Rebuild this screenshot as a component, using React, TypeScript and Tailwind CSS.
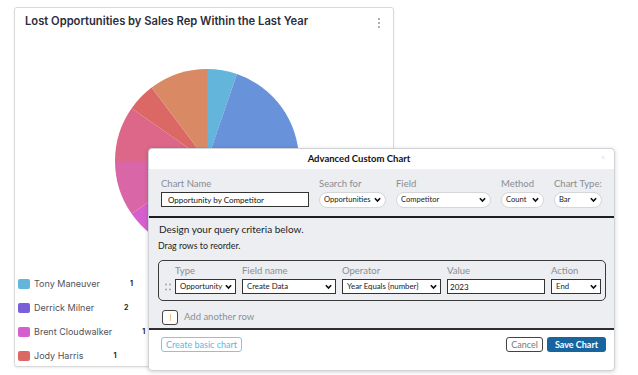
import React from "react";

const CX = 94;
const CY = 92;
const R = 92;

function pt(deg: number) {
  const a = ((deg - 90) * Math.PI) / 180;
  return [CX + R * Math.cos(a), CY + R * Math.sin(a)];
}

function slicePath(a0: number, a1: number) {
  const [x0, y0] = pt(a0);
  const [x1, y1] = pt(a1);
  const large = a1 - a0 > 180 ? 1 : 0;
  return `M ${CX} ${CY} L ${x0} ${y0} A ${R} ${R} 0 ${large} 1 ${x1} ${y1} Z`;
}

const slices = [
  { a0: 0, a1: 19, c: "#63b5dc" },
  { a0: 19, a1: 160, c: "#6892da" },
  { a0: 160, a1: 200, c: "#7b5fd9" },
  { a0: 200, a1: 235, c: "#d55fcd" },
  { a0: 235, a1: 270, c: "#d966a6" },
  { a0: 270, a1: 305, c: "#dc6788" },
  { a0: 305, a1: 323, c: "#dc6866" },
  { a0: 323, a1: 360, c: "#d98a65" },
];

const legend = [
  { name: "Tony Maneuver", n: "1", c: "#63b5dc" },
  { name: "Derrick Milner", n: "2", c: "#7b5fd9" },
  { name: "Brent Cloudwalker", n: "1", c: "#d55fcd" },
  { name: "Jody Harris", n: "1", c: "#dc6866" },
];

function Chev() {
  return (
    <svg width="7" height="6" viewBox="0 0 8 6" className="shrink-0">
      <path d="M1 1 L4 4.2 L7 1" fill="none" stroke="#111" strokeWidth="1.9" />
    </svg>
  );
}

function PillSelect({ text, w }: { text: string; w: string }) {
  return (
    <div
      className={`${w} h-[16px] rounded-full border border-[#d4d6d9] bg-white flex items-center justify-between pl-[4px] pr-[4px] text-[7.6px] text-[#222] whitespace-nowrap`}
    >
      <span>{text}</span>
      <Chev />
    </div>
  );
}

function BoxSelect({ text, w }: { text: string; w: string }) {
  return (
    <div
      className={`${w} h-[15px] border-[1.5px] border-[#333] bg-white flex items-center justify-between pl-[4px] pr-[3px] text-[7.8px] text-[#222] whitespace-nowrap`}
    >
      <span>{text}</span>
      <Chev />
    </div>
  );
}

function Label({ children }: { children: React.ReactNode }) {
  return <div className="text-[9.5px] leading-[11px] text-[#8a8d91] mb-[3px] whitespace-nowrap">{children}</div>;
}

export default function App() {
  return (
    <div className="relative w-[638px] h-[375px] bg-white overflow-hidden" style={{ fontFamily: "Lato, 'Open Sans', sans-serif" }}>
      {/* Chart card */}
      <div
        className="absolute left-[14px] top-[7px] w-[380px] h-[360px] border border-[#d9d9d9] rounded-[3px] bg-white shadow-[0_1px_2px_rgba(0,0,0,0.08)]"
        style={{ fontFamily: "Inter, 'Noto Sans', sans-serif" }}
      >
        <div className="flex items-start justify-between pl-[10px] pr-[12px] pt-[6px]">
          <div className="text-[11.2px] font-semibold text-[#2b2d3a] leading-[15px] whitespace-nowrap">
            Lost Opportunities by Sales Rep Within the Last Year
          </div>
          <svg width="4" height="12" viewBox="0 0 4 12" className="mt-[3px]">
            <circle cx="2" cy="2" r="1" fill="#8a97a8" />
            <circle cx="2" cy="6" r="1" fill="#8a97a8" />
            <circle cx="2" cy="10" r="1" fill="#8a97a8" />
          </svg>
        </div>
        <div className="ml-[98px] mt-[40px]">
          <svg width="188" height="188" viewBox="0 0 188 188">
            {slices.map((s, i) => (
              <path key={i} d={slicePath(s.a0, s.a1)} fill={s.c} />
            ))}
          </svg>
        </div>
        <div className="absolute left-[3px] top-[264px] flex flex-col">
          {legend.map((l) => (
            <div key={l.name} className="h-[24px] flex items-center">
              <div className="w-[12px] h-[10px] rounded-[2px]" style={{ background: l.c }} />
              <span className="ml-[4px] text-[9px] text-[#50525c] whitespace-nowrap">{l.name}</span>
              <span className="ml-[30px] text-[7px] font-bold text-[#222]">{l.n}</span>
            </div>
          ))}
        </div>
      </div>

      {/* Modal */}
      <div className="absolute left-[148px] top-[148px] w-[467px] h-[223px] bg-white border border-[#cfd2d6] rounded-[4px] shadow-[0_1px_4px_rgba(0,0,0,0.18)] flex flex-col overflow-hidden">
        <div className="relative h-[20px] shrink-0 flex items-center justify-center pr-[45px]">
          <span className="text-[9.5px] font-bold text-[#111]">Advanced Custom Chart</span>
          <span className="absolute right-[9px] top-[3px] text-[7px] text-[#dfe1e4]">×</span>
        </div>
        <div className="bg-[#eceef1] border-b-[2px] border-[#2e2e2e] h-[161px] shrink-0 flex flex-col">
          <div className="flex items-end pl-[12px] pt-[9px] pb-[8px] gap-[10px] border-b-[2px] border-[#1e1e1e]">
            <div className="flex flex-col">
              <Label>Chart Name</Label>
              <div className="w-[148px] h-[15px] border-[1.5px] border-[#333] bg-white flex items-center pl-[6px] text-[8px] text-[#111] mb-[1px] whitespace-nowrap">
                Opportunity by Competitor
              </div>
            </div>
            <div className="flex flex-col">
              <Label>Search for</Label>
              <PillSelect text="Opportunities" w="w-[67px]" />
            </div>
            <div className="flex flex-col">
              <Label>Field</Label>
              <PillSelect text="Competitor" w="w-[95px]" />
            </div>
            <div className="flex flex-col">
              <Label>Method</Label>
              <PillSelect text="Count" w="w-[43px]" />
            </div>
            <div className="flex flex-col">
              <Label>Chart Type:</Label>
              <PillSelect text="Bar" w="w-[48px]" />
            </div>
          </div>
          <div className="pl-[10px] pt-[4px] text-[10px] leading-[14px] text-[#1c1c1c] whitespace-nowrap">Design your query criteria below.</div>
          <div className="pl-[9px] pt-[4px] text-[8.8px] leading-[12px] text-[#1c1c1c] whitespace-nowrap">Drag rows to reorder.</div>
          <div className="ml-[9px] mt-[8px] w-[448px] h-[41px] border-[1.5px] border-[#3a3a3a] rounded-[5px] flex items-end pb-[6px] pl-[6px] gap-[6px]">
            <svg width="6" height="8" viewBox="0 0 6 8" className="mb-[3px] -mr-[2px]">
              <circle cx="1" cy="1.5" r="0.9" fill="#9aa0a8" />
              <circle cx="5" cy="1.5" r="0.9" fill="#9aa0a8" />
              <circle cx="1" cy="6.5" r="0.9" fill="#9aa0a8" />
              <circle cx="5" cy="6.5" r="0.9" fill="#9aa0a8" />
            </svg>
            <div className="flex flex-col">
              <Label>Type</Label>
              <BoxSelect text="Opportunity" w="w-[61px]" />
            </div>
            <div className="flex flex-col">
              <Label>Field name</Label>
              <BoxSelect text="Create Data" w="w-[94px]" />
            </div>
            <div className="flex flex-col">
              <Label>Operator</Label>
              <BoxSelect text="Year Equals {number}" w="w-[99px]" />
            </div>
            <div className="flex flex-col">
              <Label>Value</Label>
              <div className="w-[98px] h-[15px] border-[1.5px] border-[#333] bg-white flex items-center pl-[2px] text-[8px] text-[#111]">
                2023
              </div>
            </div>
            <div className="flex flex-col">
              <Label>Action</Label>
              <BoxSelect text="End" w="w-[50px]" />
            </div>
          </div>
          <div className="flex items-center pl-[13px] mt-[9px]">
            <div className="w-[16px] h-[15px] border-[1.5px] border-[#444] rounded-[3px] bg-white flex items-center justify-center">
              <div className="w-[1px] h-[7px] bg-[#f0c58a]" />
            </div>
            <span className="ml-[6px] text-[9.5px] text-[#8d9094] whitespace-nowrap">Add another row</span>
          </div>
        </div>
        <div className="flex items-center justify-between pl-[12px] pr-[8px] pt-[7px]">
          <div className="h-[15px] px-[4px] border-[1.5px] border-[#79c9ec] rounded-[3px] flex items-center text-[9px] text-[#52bbe6] whitespace-nowrap">
            Create basic chart
          </div>
          <div className="flex items-center gap-[4px]">
            <div className="w-[37px] h-[15px] border-[1.5px] border-[#444] rounded-[3px] flex items-center justify-center text-[9px] text-[#777]">
              Cancel
            </div>
            <div className="w-[59px] h-[15px] bg-[#17649f] rounded-[3px] flex items-center justify-center text-[9px] font-bold text-white whitespace-nowrap">
              Save Chart
            </div>
          </div>
        </div>
      </div>
    </div>
  );
}
